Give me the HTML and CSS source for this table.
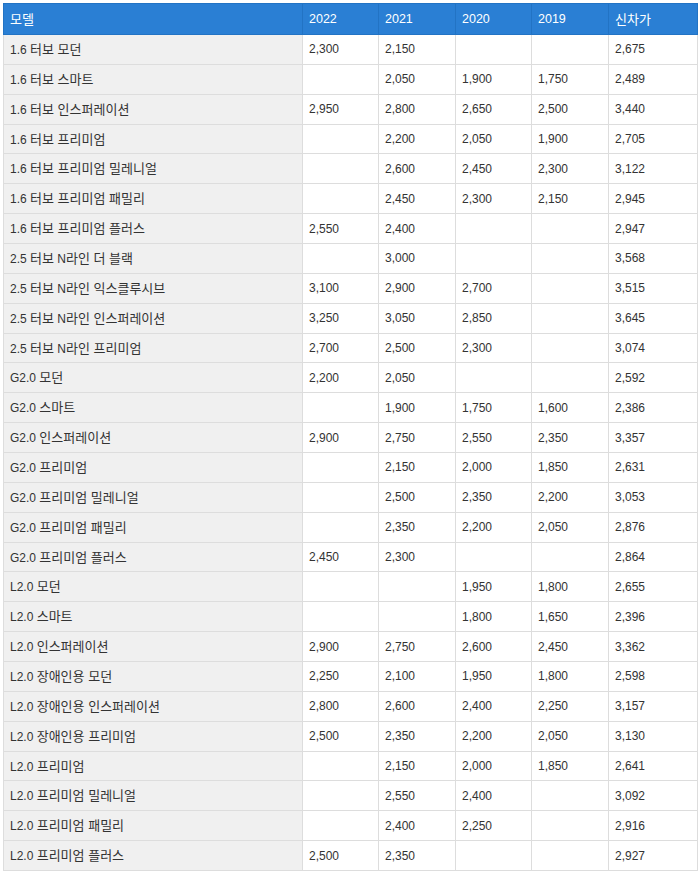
FILE: index.html
```html
<!DOCTYPE html>
<html lang="ko">
<head>
<meta charset="utf-8">
<link rel="stylesheet" href="styles.css">
</head>
<body>
<table class="price-table">
<colgroup>
<col class="c-model"><col class="c-y"><col class="c-y2"><col class="c-y"><col class="c-y2"><col class="c-new">
</colgroup>
<thead>
<tr><th><span class="ko">모델</span></th><th>2022</th><th>2021</th><th>2020</th><th>2019</th><th><span class="ko">신차가</span></th></tr>
</thead>
<tbody>
<tr><td>1.6 <span class="ko">터보 모던</span></td><td>2,300</td><td>2,150</td><td></td><td></td><td>2,675</td></tr>
<tr><td>1.6 <span class="ko">터보 스마트</span></td><td></td><td>2,050</td><td>1,900</td><td>1,750</td><td>2,489</td></tr>
<tr><td>1.6 <span class="ko">터보 인스퍼레이션</span></td><td>2,950</td><td>2,800</td><td>2,650</td><td>2,500</td><td>3,440</td></tr>
<tr><td>1.6 <span class="ko">터보 프리미엄</span></td><td></td><td>2,200</td><td>2,050</td><td>1,900</td><td>2,705</td></tr>
<tr><td>1.6 <span class="ko">터보 프리미엄 밀레니얼</span></td><td></td><td>2,600</td><td>2,450</td><td>2,300</td><td>3,122</td></tr>
<tr><td>1.6 <span class="ko">터보 프리미엄 패밀리</span></td><td></td><td>2,450</td><td>2,300</td><td>2,150</td><td>2,945</td></tr>
<tr><td>1.6 <span class="ko">터보 프리미엄 플러스</span></td><td>2,550</td><td>2,400</td><td></td><td></td><td>2,947</td></tr>
<tr><td>2.5 <span class="ko">터보</span> N<span class="ko">라인 더 블랙</span></td><td></td><td>3,000</td><td></td><td></td><td>3,568</td></tr>
<tr><td>2.5 <span class="ko">터보</span> N<span class="ko">라인 익스클루시브</span></td><td>3,100</td><td>2,900</td><td>2,700</td><td></td><td>3,515</td></tr>
<tr><td>2.5 <span class="ko">터보</span> N<span class="ko">라인 인스퍼레이션</span></td><td>3,250</td><td>3,050</td><td>2,850</td><td></td><td>3,645</td></tr>
<tr><td>2.5 <span class="ko">터보</span> N<span class="ko">라인 프리미엄</span></td><td>2,700</td><td>2,500</td><td>2,300</td><td></td><td>3,074</td></tr>
<tr><td>G2.0 <span class="ko">모던</span></td><td>2,200</td><td>2,050</td><td></td><td></td><td>2,592</td></tr>
<tr><td>G2.0 <span class="ko">스마트</span></td><td></td><td>1,900</td><td>1,750</td><td>1,600</td><td>2,386</td></tr>
<tr><td>G2.0 <span class="ko">인스퍼레이션</span></td><td>2,900</td><td>2,750</td><td>2,550</td><td>2,350</td><td>3,357</td></tr>
<tr><td>G2.0 <span class="ko">프리미엄</span></td><td></td><td>2,150</td><td>2,000</td><td>1,850</td><td>2,631</td></tr>
<tr><td>G2.0 <span class="ko">프리미엄 밀레니얼</span></td><td></td><td>2,500</td><td>2,350</td><td>2,200</td><td>3,053</td></tr>
<tr><td>G2.0 <span class="ko">프리미엄 패밀리</span></td><td></td><td>2,350</td><td>2,200</td><td>2,050</td><td>2,876</td></tr>
<tr><td>G2.0 <span class="ko">프리미엄 플러스</span></td><td>2,450</td><td>2,300</td><td></td><td></td><td>2,864</td></tr>
<tr><td>L2.0 <span class="ko">모던</span></td><td></td><td></td><td>1,950</td><td>1,800</td><td>2,655</td></tr>
<tr><td>L2.0 <span class="ko">스마트</span></td><td></td><td></td><td>1,800</td><td>1,650</td><td>2,396</td></tr>
<tr><td>L2.0 <span class="ko">인스퍼레이션</span></td><td>2,900</td><td>2,750</td><td>2,600</td><td>2,450</td><td>3,362</td></tr>
<tr><td>L2.0 <span class="ko">장애인용 모던</span></td><td>2,250</td><td>2,100</td><td>1,950</td><td>1,800</td><td>2,598</td></tr>
<tr><td>L2.0 <span class="ko">장애인용 인스퍼레이션</span></td><td>2,800</td><td>2,600</td><td>2,400</td><td>2,250</td><td>3,157</td></tr>
<tr><td>L2.0 <span class="ko">장애인용 프리미엄</span></td><td>2,500</td><td>2,350</td><td>2,200</td><td>2,050</td><td>3,130</td></tr>
<tr><td>L2.0 <span class="ko">프리미엄</span></td><td></td><td>2,150</td><td>2,000</td><td>1,850</td><td>2,641</td></tr>
<tr><td>L2.0 <span class="ko">프리미엄 밀레니얼</span></td><td></td><td>2,550</td><td>2,400</td><td></td><td>3,092</td></tr>
<tr><td>L2.0 <span class="ko">프리미엄 패밀리</span></td><td></td><td>2,400</td><td>2,250</td><td></td><td>2,916</td></tr>
<tr><td>L2.0 <span class="ko">프리미엄 플러스</span></td><td>2,500</td><td>2,350</td><td></td><td></td><td>2,927</td></tr>
</tbody>
</table>
</body>
</html>
```
FILE: styles.css
```css
html, body {
  margin: 0;
  padding: 0;
  background: #ffffff;
}
body {
  padding: 3px;
  font-family: "Liberation Sans", Arial, "Noto Sans CJK KR", sans-serif;
  font-size: 12px;
  color: #333333;
}
.price-table {
  border-collapse: collapse;
  table-layout: fixed;
  width: 694px;
}
.c-model { width: 299px; }
.c-y { width: 76px; }
.c-y2 { width: 77px; }
.c-new { width: 89px; }
.price-table th {
  background: #2a7fd4;
  color: #ffffff;
  font-weight: normal;
  text-align: left;
  height: 31px;
  padding: 0 6px;
  box-sizing: border-box;
  border: 1px solid #2273c4;
  font-size: 12.5px;
}
.price-table td {
  height: 29.86px;
  padding: 0 6px;
  box-sizing: border-box;
  border: 1px solid #dddddd;
  background: #ffffff;
  vertical-align: middle;
}
.price-table td:first-child {
  background: #f0f0f0;
}
.ko {
  font-family: "Noto Sans CJK KR", sans-serif;
  font-size: 13px;
  line-height: 1;
}
```
